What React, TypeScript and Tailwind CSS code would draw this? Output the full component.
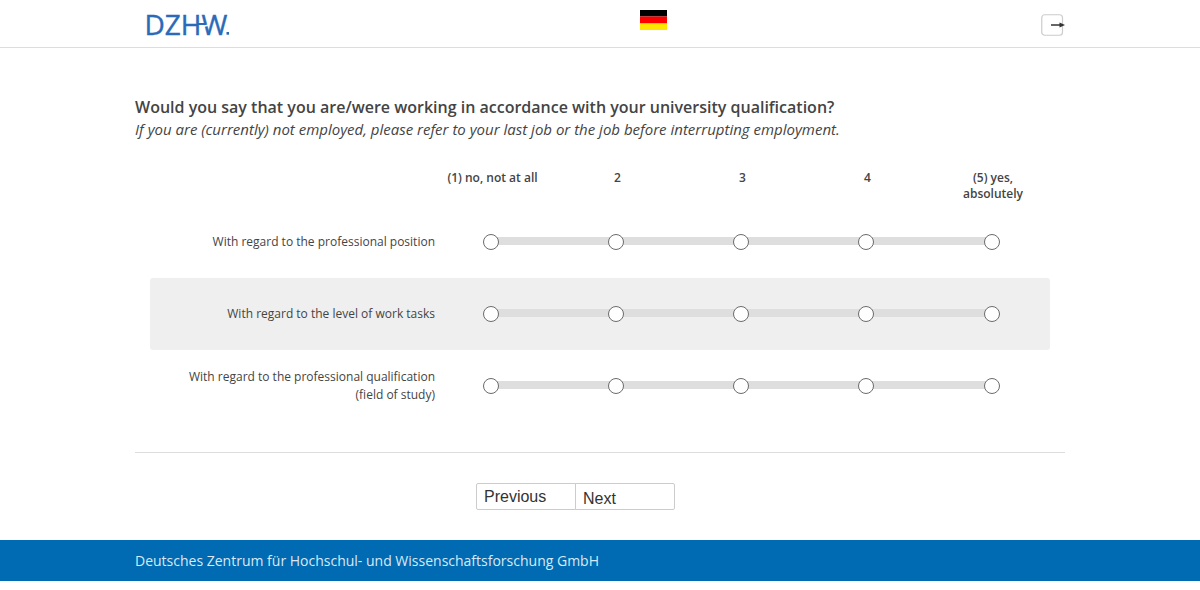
import { useState } from "react";

const scale = ["(1) no, not at all", "2", "3", "4", "(5) yes, absolutely"];

const items = [
  { id: "position", label: "With regard to the professional position" },
  { id: "tasks", label: "With regard to the level of work tasks" },
  { id: "field", label: "With regard to the professional qualification (field of study)" },
];

function Logo() {
  return (
    <svg width="92" height="28" viewBox="0 0 92 28" role="img" aria-label="DZHW" className="block overflow-visible">
      <g fill="#2a6ab8" stroke="#2a6ab8" strokeWidth="0.4" fontSize="28" fontFamily="'Open Sans', sans-serif">
        <text x="1.5" y="24.5">DZH</text>
        <text x="58.5" y="24.5">W</text>
      </g>
      {/* crossbar of the H runs on into the W */}
      <path d="M59.5 16.6L66 15" stroke="#fff" strokeWidth="1.5" />
      <path d="M54 14H63" stroke="#2a6ab8" strokeWidth="2" />
      <rect x="83.5" y="22" width="2.5" height="2.7" fill="#2a6ab8" />
    </svg>
  );
}

function Flag() {
  return (
    <svg width="27" height="20" viewBox="0 0 27 20" className="block">
      <rect width="27" height="6.5" fill="#000" />
      <rect y="6.5" width="27" height="7" fill="#f00" />
      <rect y="13.5" width="27" height="6.5" fill="#ffe600" />
    </svg>
  );
}

function ExitIcon() {
  return (
    <svg width="24" height="22" viewBox="0 0 24 22" className="block">
      <rect x="0.75" y="0.75" width="20.75" height="20.5" rx="3" fill="none" stroke="#ccc" strokeWidth="1.2" />
      <path d="M10 11H20" stroke="#333" strokeWidth="1.5" />
      <path d="M18.5 8.5L24 11L18.5 13.5Z" fill="#333" />
    </svg>
  );
}

export default function App() {
  const [answers, setAnswers] = useState<Record<string, number>>({});

  return (
    <div className="bg-white font-['Open_Sans',sans-serif] text-[#444]">
      <header className="border-b border-[#ddd]">
        <div className="mx-auto grid h-[47px] max-w-[930px] grid-cols-[505fr_425fr]">
          <a href="#home" className="justify-self-start pt-2.5 pl-2">
            <Logo />
          </a>
          <div className="flex items-start justify-between">
            <button type="button" aria-label="Deutsch" className="pt-2.5">
              <Flag />
            </button>
            <button type="button" aria-label="Exit" className="pt-3.5">
              <ExitIcon />
            </button>
          </div>
        </div>
      </header>

      <main className="mx-auto max-w-[930px] pt-[47px]">
        <h1 className="text-base leading-6 font-semibold">
          Would you say that you are/were working in accordance with your university qualification?
        </h1>
        <p className="text-[15px] leading-5 italic">
          If you are (currently) not employed, please refer to your last job or the job before interrupting employment.
        </p>

        <div className="border-b border-[#ddd] px-[15px] pt-[31px] pb-[30px]">
          <table className="w-full table-fixed border-separate border-spacing-0 text-xs">
            <colgroup>
              <col className="w-[278px]" />
              <col className="w-[125px]" />
              <col className="w-[125px]" />
              <col className="w-[125px]" />
              <col className="w-[125px]" />
              <col />
            </colgroup>
            <thead>
              <tr>
                <td />
                {scale.map((label) => (
                  <th key={label} scope="col" className="pb-1 pl-1 align-top leading-4 font-semibold last:pl-2">
                    <div className="mx-auto max-w-25">{label}</div>
                  </th>
                ))}
              </tr>
            </thead>
            <tbody>
              {items.map((item) => (
                <tr key={item.id} className="group h-18 even:bg-[#efefef]">
                  <th scope="row" className="rounded-l-[3px] pl-8 text-right leading-[18px] font-normal">
                    <div className="-mr-[7px]">{item.label}</div>
                  </th>
                  {scale.map((label, i) => (
                    <td key={label} className="group/cell relative last:rounded-r-[3px] last:pl-1.5">
                      <span className="absolute top-[31px] right-0 left-0 h-2 bg-[#dedede] group-nth-2/cell:left-1/2 group-last/cell:right-1/2" />
                      <input
                        type="radio"
                        name={item.id}
                        aria-label={`${item.label}: ${label}`}
                        checked={answers[item.id] === i}
                        onChange={() => setAnswers({ ...answers, [item.id]: i })}
                        className="relative mx-auto block size-4 appearance-none rounded-full border border-[#6b6b6b] bg-white checked:border-4 checked:border-[#006ab2]"
                      />
                    </td>
                  ))}
                </tr>
              ))}
            </tbody>
          </table>
        </div>

        <div className="flex justify-center py-[30px] pr-[49px] font-['Liberation_Sans',sans-serif] text-base leading-5 text-[#333]">
          <button type="button" className="h-[27px] w-25 rounded-l-xs border border-[#ccc] px-[7px] text-left">
            Previous
          </button>
          <button type="button" className="-ml-px h-[27px] w-25 rounded-r-xs border border-[#ccc] px-[7px] pt-1 text-left">
            Next
          </button>
        </div>
      </main>

      <footer className="bg-[#006ab2] text-[#d9e9f4]">
        <div className="mx-auto max-w-[930px] py-2.5 text-sm leading-[21px]">
          Deutsches Zentrum für Hochschul- und Wissenschaftsforschung GmbH
        </div>
      </footer>
    </div>
  );
}
